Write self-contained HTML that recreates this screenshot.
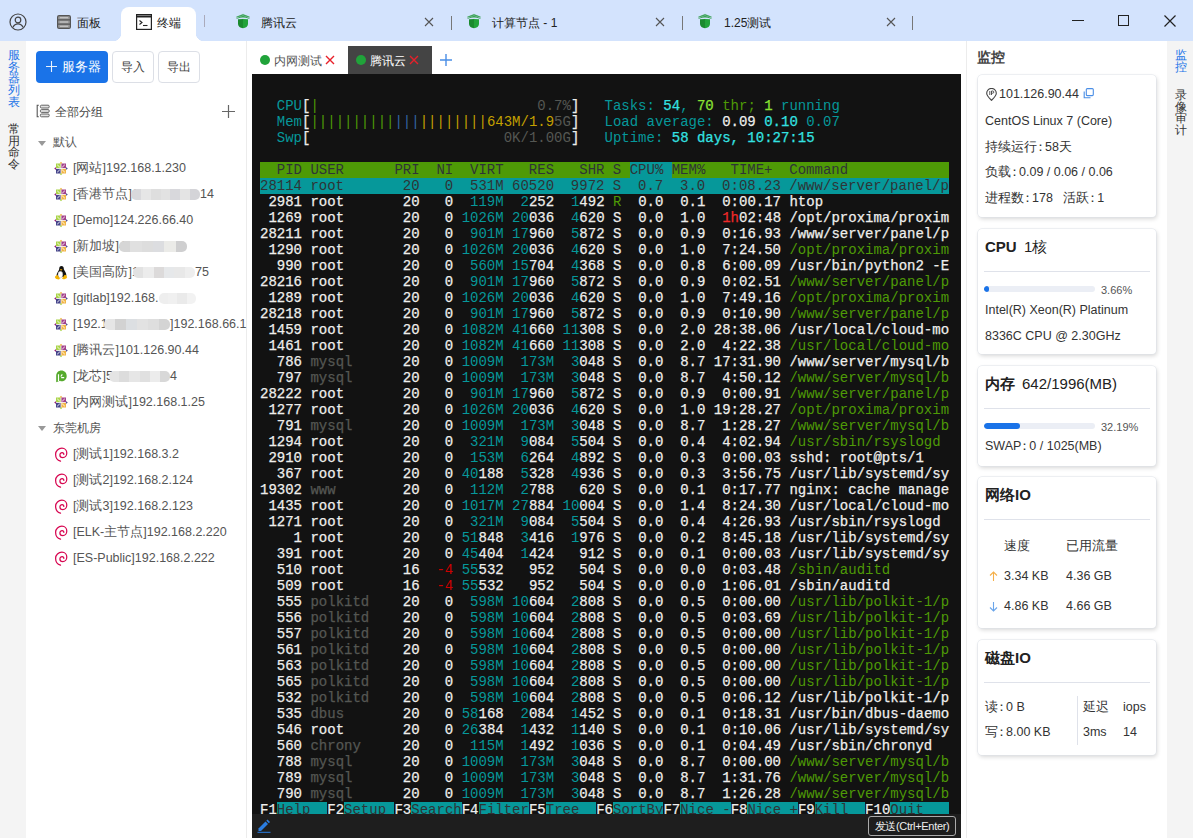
<!DOCTYPE html>
<html><head><meta charset="utf-8">
<style>
*{margin:0;padding:0;box-sizing:border-box}
html,body{width:1193px;height:838px;overflow:hidden;background:#fff;font-family:"Liberation Sans",sans-serif;color:#333;position:relative}
.abs{position:absolute}
#topbar{position:absolute;left:0;top:0;width:1193px;height:41px;background:#d3e3fd}
.tabtxt{position:absolute;top:15px;font-size:12px;line-height:16px;color:#222;white-space:nowrap}
.sep{position:absolute;width:1px;background:#777}
#lstrip{position:absolute;left:0;top:41px;width:26px;height:797px;background:#f4f4f4}
.vtxt{position:absolute;left:7.5px;width:13px;font-size:12px;line-height:11.7px;word-break:break-all;text-align:center}
#side{position:absolute;left:26px;top:41px;width:221px;height:797px;background:#fff;border-right:1px solid #ececec}
.btn{position:absolute;top:51px;height:32px;border:1px solid #dcdfe6;border-radius:4px;font-size:12px;line-height:30px;text-align:center;color:#444;background:#fff}
.item{position:absolute;left:54px;height:18px;white-space:nowrap;font-size:12.5px;line-height:18px;color:#555}
.item .ic{position:absolute;left:0;top:2px;width:14px;height:15px}
.item .ic svg{display:block}
.item .it{position:absolute;left:19px;top:0}
.blur{position:absolute;top:4px;height:11px;border-radius:5px;filter:blur(0.6px)}
#subtabs{position:absolute;left:252px;top:42px;width:709px;height:32px;background:#fff}
#term{position:absolute;left:252px;top:74px;width:709px;height:740px;background:#121212;overflow:hidden}
#term pre{position:absolute;left:8px;top:8px;font-family:"Liberation Mono",monospace;font-size:14px;line-height:16px;color:#eeeeec;white-space:pre}
#term i{font-style:normal}
#term .k{color:#2e3436} #term .g{color:#4e9a06} #term .G{color:#8ae234} #term .c{color:#06989a} #term .C{color:#34e2e2}
#term .w{color:#eeeeec} #term .r{color:#555753} #term .d{color:#cc0000} #term .D{color:#ef2929} #term .y{color:#c4a000} #term .l{color:#3465a4}
#term .b{-webkit-text-stroke:0.25px currentColor} #term .bg{background:#4e9a06} #term .bc{background:#06989a}
#tbar{position:absolute;left:252px;top:814px;width:709px;height:24px;background:#1e1e1e}
#mon{position:absolute;left:966px;top:41px;width:201px;height:797px;background:#fff;border-left:1px solid #ececec}
#rstrip{position:absolute;left:1167px;top:41px;width:26px;height:797px;background:#f4f4f4}
.card{position:absolute;left:978px;width:178px;background:#fff;border-radius:4px;box-shadow:0 0 0 0.6px #dfe3ea,1px 2px 4px rgba(0,0,0,.16)}
.ct{position:absolute;left:7px;font-size:12.5px;line-height:16px;color:#333;white-space:nowrap}
.hd{position:absolute;left:7px;font-size:15px;line-height:18px;color:#222;white-space:nowrap}
.hd b{font-weight:bold}
.dv{position:absolute;left:6px;right:6px;height:1px;background:#dfe2ea}
.pb{position:absolute;left:6px;width:111px;height:6px;border-radius:3px;background:#ebeef5;overflow:hidden}
.pb i{position:absolute;left:0;top:0;height:6px;border-radius:3px;background:#1a73e8}
.cl{display:inline-block;margin-left:-3.5px;margin-right:-1.5px}
.pct{position:absolute;left:123px;font-size:11px;line-height:14px;color:#555}
</style></head><body>
<div id="topbar">
  <svg class="abs" style="left:9px;top:13px" width="18" height="18" viewBox="0 0 18 18"><circle cx="9" cy="9" r="8" fill="none" stroke="#444" stroke-width="1.2"/><circle cx="9" cy="7" r="2.8" fill="none" stroke="#444" stroke-width="1.2"/><path d="M4 14.2c1-2.2 2.8-3.4 5-3.4s4 1.2 5 3.4" fill="none" stroke="#444" stroke-width="1.2"/></svg>
  <svg class="abs" style="left:57px;top:15px" width="14" height="14" viewBox="0 0 14 14"><rect x="0.6" y="0.6" width="12.8" height="12.8" rx="1.5" fill="#9a9a9a" stroke="#555" stroke-width="1.2"/><path d="M1 4.8h12M1 9.2h12" stroke="#555" stroke-width="1.2"/><path d="M3 2.7h8M3 7h8M3 11.3h8" stroke="#ccc" stroke-width="1"/></svg>
  <div class="tabtxt" style="left:77px">面板</div>
  <div class="abs" style="left:121px;top:7px;width:75px;height:34px;background:#fff;border-radius:8px 8px 0 0"></div>
  <div class="abs" style="left:113px;top:33px;width:8px;height:8px;background:radial-gradient(circle at 0 0,#d3e3fd 8px,#fff 8.5px)"></div>
  <div class="abs" style="left:196px;top:33px;width:8px;height:8px;background:radial-gradient(circle at 100% 0,#d3e3fd 8px,#fff 8.5px)"></div>
  <svg class="abs" style="left:136px;top:14px" width="16" height="16" viewBox="0 0 16 16"><rect x="0.6" y="0.6" width="14.8" height="14.8" fill="#fff" stroke="#222" stroke-width="1.2"/><path d="M1 2.5h14" stroke="#222" stroke-width="2"/><path d="M3.5 6.5l2.5 2-2.5 2" fill="none" stroke="#222" stroke-width="1.1"/><path d="M7 11.5h4.5" stroke="#222" stroke-width="1.1"/></svg>
  <div class="tabtxt" style="left:157px">终端</div>
  <div class="sep" style="left:204px;top:15px;height:12px;background:#aab"></div>
  <div class="abs" style="left:236px;top:13px"><svg width="14" height="16" viewBox="0 0 14 16"><path d="M7 0.8L12.8 3.4 7 5.2 1.2 3.4z" fill="#3fae5a" opacity=".55"/><path d="M0.3 4.1L7 1.9l6.7 2.2M0.6 5.4L7 3.4l6.4 2" fill="none" stroke="#2e9a48" stroke-width="1" opacity=".85"/><path d="M2 6.2L7 6v9.2c-2.8-.3-5-2-5-4.3z" fill="#1a8a2e"/><path d="M12 6.2L7 6v9.2c2.8-.3 5-2 5-4.3z" fill="#22a33a"/></svg></div>
  <div class="tabtxt" style="left:261px">腾讯云</div>
  <div class="abs" style="left:424px;top:13px"><svg width="10" height="10" viewBox="0 0 10 10"><path d="M1 1l8 8M9 1l-8 8" stroke="#555" stroke-width="1.1"/></svg></div>
  <div class="sep" style="left:451px;top:16px;height:14px"></div>
  <div class="abs" style="left:467px;top:13px"><svg width="14" height="16" viewBox="0 0 14 16"><path d="M7 0.8L12.8 3.4 7 5.2 1.2 3.4z" fill="#3fae5a" opacity=".55"/><path d="M0.3 4.1L7 1.9l6.7 2.2M0.6 5.4L7 3.4l6.4 2" fill="none" stroke="#2e9a48" stroke-width="1" opacity=".85"/><path d="M2 6.2L7 6v9.2c-2.8-.3-5-2-5-4.3z" fill="#1a8a2e"/><path d="M12 6.2L7 6v9.2c2.8-.3 5-2 5-4.3z" fill="#22a33a"/></svg></div>
  <div class="tabtxt" style="left:492px">计算节点 - 1</div>
  <div class="abs" style="left:655px;top:13px"><svg width="10" height="10" viewBox="0 0 10 10"><path d="M1 1l8 8M9 1l-8 8" stroke="#555" stroke-width="1.1"/></svg></div>
  <div class="sep" style="left:682px;top:16px;height:14px"></div>
  <div class="abs" style="left:698px;top:13px"><svg width="14" height="16" viewBox="0 0 14 16"><path d="M7 0.8L12.8 3.4 7 5.2 1.2 3.4z" fill="#3fae5a" opacity=".55"/><path d="M0.3 4.1L7 1.9l6.7 2.2M0.6 5.4L7 3.4l6.4 2" fill="none" stroke="#2e9a48" stroke-width="1" opacity=".85"/><path d="M2 6.2L7 6v9.2c-2.8-.3-5-2-5-4.3z" fill="#1a8a2e"/><path d="M12 6.2L7 6v9.2c2.8-.3 5-2 5-4.3z" fill="#22a33a"/></svg></div>
  <div class="tabtxt" style="left:724px">1.25测试</div>
  <div class="abs" style="left:886px;top:13px"><svg width="10" height="10" viewBox="0 0 10 10"><path d="M1 1l8 8M9 1l-8 8" stroke="#555" stroke-width="1.1"/></svg></div>
  <div class="sep" style="left:912px;top:16px;height:14px"></div>
  <div class="abs" style="left:1072px;top:20px;width:12px;height:1px;background:#222"></div>
  <div class="abs" style="left:1118px;top:15px;width:11px;height:11px;border:1.2px solid #222"></div>
  <svg class="abs" style="left:1164px;top:15px" width="12" height="12" viewBox="0 0 12 12"><path d="M0.5 0.5l11 11M11.5 0.5l-11 11" stroke="#222" stroke-width="1.2"/></svg>
</div>

<div id="lstrip">
  <div class="vtxt" style="top:9px;color:#1a73e8">服务器列表</div>
  <div class="vtxt" style="top:83px;color:#333">常用命令</div>
</div>
<div id="side"></div>
<div class="abs" style="left:36px;top:51px;width:72px;height:32px;background:#1a73e8;border-radius:4px;color:#fff;font-size:12.5px;line-height:32px">
  <svg class="abs" style="left:10px;top:10px" width="11" height="11" viewBox="0 0 11 11"><path d="M5.5 0v11M0 5.5h11" stroke="#fff" stroke-width="1.1" opacity=".9"/></svg><span class="abs" style="left:26px;top:0;font-weight:500">服务器</span></div>
<div class="btn" style="left:112px;width:42px">导入</div>
<div class="btn" style="left:158px;width:42px">导出</div>
<svg class="abs" style="left:36px;top:104px" width="14" height="14" viewBox="0 0 14 14"><path d="M2.8 1.3H1.2v11.4h1.6" fill="none" stroke="#555" stroke-width="1.1"/><rect x="4.4" y="1.2" width="8.8" height="2.8" rx="1.1" fill="#e4e4e4" stroke="#555" stroke-width=".9"/><rect x="4.4" y="5.6" width="8.8" height="2.8" rx="1.1" fill="#e4e4e4" stroke="#555" stroke-width=".9"/><rect x="4.4" y="10" width="8.8" height="2.8" rx="1.1" fill="#e4e4e4" stroke="#555" stroke-width=".9"/></svg>
<div class="abs" style="left:55px;top:103px;font-size:12px;line-height:18px;color:#444">全部分组</div>
<svg class="abs" style="left:222px;top:105px" width="13" height="13" viewBox="0 0 13 13"><path d="M6.5 0v13M0 6.5h13" stroke="#666" stroke-width="1.2"/></svg>
<svg class="abs" style="left:38px;top:141px" width="8" height="5" viewBox="0 0 8 5"><path d="M0 0h8L4 5z" fill="#999"/></svg>
<div class="abs" style="left:53px;top:133px;font-size:12px;line-height:18px;color:#555">默认</div>
<svg class="abs" style="left:38px;top:426px" width="8" height="5" viewBox="0 0 8 5"><path d="M0 0h8L4 5z" fill="#999"/></svg>
<div class="abs" style="left:53px;top:419px;font-size:12px;line-height:18px;color:#555">东莞机房</div>
<div class="item" style="top:159px"><span class="ic"><svg width="14" height="15" viewBox="0 0 14 15"><path d="M5.6 2.6L7 0.7l1.4 1.9z" fill="#efa724"/><path d="M2.1 6.1L0.2 7.5l1.9 1.4z" fill="#932279"/><path d="M11.9 6.1l1.9 1.4-1.9 1.4z" fill="#262577" opacity=".8"/><path d="M5.6 12.4L7 14.3l1.4-1.9z" fill="#9ccd2a"/><g opacity=".85"><rect x="2" y="2.5" width="4.6" height="4.6" fill="#9ccd2a"/><rect x="7.4" y="2.5" width="4.6" height="4.6" fill="#932279"/><rect x="2" y="7.9" width="4.6" height="4.6" fill="#262577"/><rect x="7.4" y="7.9" width="4.6" height="4.6" fill="#efa724"/></g><path d="M3.2 3.7l2.6 2.6M8.2 6.3l2.6-2.6M3.2 11.3l2.6-2.6M8.2 8.7l2.6 2.6" stroke="#fff" stroke-width="1.1" opacity=".6"/></svg></span><span class="it">[网站]192.168.1.230</span></div>
<div class="item" style="top:185px"><span class="ic"><svg width="14" height="15" viewBox="0 0 14 15"><path d="M5.6 2.6L7 0.7l1.4 1.9z" fill="#efa724"/><path d="M2.1 6.1L0.2 7.5l1.9 1.4z" fill="#932279"/><path d="M11.9 6.1l1.9 1.4-1.9 1.4z" fill="#262577" opacity=".8"/><path d="M5.6 12.4L7 14.3l1.4-1.9z" fill="#9ccd2a"/><g opacity=".85"><rect x="2" y="2.5" width="4.6" height="4.6" fill="#9ccd2a"/><rect x="7.4" y="2.5" width="4.6" height="4.6" fill="#932279"/><rect x="2" y="7.9" width="4.6" height="4.6" fill="#262577"/><rect x="7.4" y="7.9" width="4.6" height="4.6" fill="#efa724"/></g><path d="M3.2 3.7l2.6 2.6M8.2 6.3l2.6-2.6M3.2 11.3l2.6-2.6M8.2 8.7l2.6 2.6" stroke="#fff" stroke-width="1.1" opacity=".6"/></svg></span><span class="it">[香港节点]1</span><span class="blur" style="left:77px;width:69px;background:linear-gradient(90deg,#d9d9dc 0.0%,#d9d9dc 14.3%,#e6e6e6 14.3%,#e6e6e6 28.6%,#dedede 28.6%,#dedede 42.9%,#e2e2e2 42.9%,#e2e2e2 57.1%,#d8d8dc 57.1%,#d8d8dc 71.4%,#e4e4e4 71.4%,#e4e4e4 85.7%,#d4d4d8 85.7%,#d4d4d8 100.0%)"></span><span class="it" style="left:146px">14</span></div>
<div class="item" style="top:211px"><span class="ic"><svg width="14" height="15" viewBox="0 0 14 15"><path d="M5.6 2.6L7 0.7l1.4 1.9z" fill="#efa724"/><path d="M2.1 6.1L0.2 7.5l1.9 1.4z" fill="#932279"/><path d="M11.9 6.1l1.9 1.4-1.9 1.4z" fill="#262577" opacity=".8"/><path d="M5.6 12.4L7 14.3l1.4-1.9z" fill="#9ccd2a"/><g opacity=".85"><rect x="2" y="2.5" width="4.6" height="4.6" fill="#9ccd2a"/><rect x="7.4" y="2.5" width="4.6" height="4.6" fill="#932279"/><rect x="2" y="7.9" width="4.6" height="4.6" fill="#262577"/><rect x="7.4" y="7.9" width="4.6" height="4.6" fill="#efa724"/></g><path d="M3.2 3.7l2.6 2.6M8.2 6.3l2.6-2.6M3.2 11.3l2.6-2.6M8.2 8.7l2.6 2.6" stroke="#fff" stroke-width="1.1" opacity=".6"/></svg></span><span class="it">[Demo]124.226.66.40</span></div>
<div class="item" style="top:237px"><span class="ic"><svg width="14" height="15" viewBox="0 0 14 15"><path d="M5.6 2.6L7 0.7l1.4 1.9z" fill="#efa724"/><path d="M2.1 6.1L0.2 7.5l1.9 1.4z" fill="#932279"/><path d="M11.9 6.1l1.9 1.4-1.9 1.4z" fill="#262577" opacity=".8"/><path d="M5.6 12.4L7 14.3l1.4-1.9z" fill="#9ccd2a"/><g opacity=".85"><rect x="2" y="2.5" width="4.6" height="4.6" fill="#9ccd2a"/><rect x="7.4" y="2.5" width="4.6" height="4.6" fill="#932279"/><rect x="2" y="7.9" width="4.6" height="4.6" fill="#262577"/><rect x="7.4" y="7.9" width="4.6" height="4.6" fill="#efa724"/></g><path d="M3.2 3.7l2.6 2.6M8.2 6.3l2.6-2.6M3.2 11.3l2.6-2.6M8.2 8.7l2.6 2.6" stroke="#fff" stroke-width="1.1" opacity=".6"/></svg></span><span class="it">[新加坡]4</span><span class="blur" style="left:65px;width:68px;background:linear-gradient(90deg,#d6d6d6 0.0%,#d6d6d6 16.7%,#e0e0e0 16.7%,#e0e0e0 33.3%,#dddddd 33.3%,#dddddd 50.0%,#dcdde0 50.0%,#dcdde0 66.7%,#ebebe8 66.7%,#ebebe8 83.3%,#cfcfd0 83.3%,#cfcfd0 100.0%)"></span></div>
<div class="item" style="top:263px"><span class="ic"><svg width="14" height="15" viewBox="0 0 14 15"><path d="M7.5 1c-1.6 0-2.3 1.3-2.3 2.8 0 1-.4 1.6-1 2.5-.8 1.2-1.6 2.6-1.6 4.2 0 .8.3 1.3.6 1.6h8.6c.4-.6.6-1.4.5-2.3-.2-1.6-1-3-1.8-4.2-.6-.9-.8-1.6-.8-2.5C9.7 2.1 9 1 7.5 1z" fill="#111"/><ellipse cx="6.4" cy="9.6" rx="2.4" ry="3.3" fill="#fff" stroke="#999" stroke-width=".4"/><path d="M5.7 4.2h2.8l-1.4 1.6z" fill="#f5a800"/><path d="M0.9 12.2c.3-1.2 1.5-2.2 2.3-2.2.7 0 1.5 2 2.5 3.1.5.6-.2 1.3-1 1.3-1.5 0-3.4-.7-3.8-2.2zM13.1 12.2c-.3-1.2-1.3-2.4-2-2.4-.7 0-1.8 2.2-2.8 3.3-.5.6.2 1.1 1 1.1 1.5 0 3.4-.6 3.8-2z" fill="#f5b400"/></svg></span><span class="it">[美国高防]1</span><span class="blur" style="left:79px;width:62px;background:linear-gradient(90deg,#e2e2e2 0.0%,#e2e2e2 16.7%,#ececec 16.7%,#ececec 33.3%,#dcdada 33.3%,#dcdada 50.0%,#e6e8ea 50.0%,#e6e8ea 66.7%,#e8e8e8 66.7%,#e8e8e8 83.3%,#eeeeee 83.3%,#eeeeee 100.0%)"></span><span class="it" style="left:141px">75</span></div>
<div class="item" style="top:289px"><span class="ic"><svg width="14" height="15" viewBox="0 0 14 15"><path d="M5.6 2.6L7 0.7l1.4 1.9z" fill="#efa724"/><path d="M2.1 6.1L0.2 7.5l1.9 1.4z" fill="#932279"/><path d="M11.9 6.1l1.9 1.4-1.9 1.4z" fill="#262577" opacity=".8"/><path d="M5.6 12.4L7 14.3l1.4-1.9z" fill="#9ccd2a"/><g opacity=".85"><rect x="2" y="2.5" width="4.6" height="4.6" fill="#9ccd2a"/><rect x="7.4" y="2.5" width="4.6" height="4.6" fill="#932279"/><rect x="2" y="7.9" width="4.6" height="4.6" fill="#262577"/><rect x="7.4" y="7.9" width="4.6" height="4.6" fill="#efa724"/></g><path d="M3.2 3.7l2.6 2.6M8.2 6.3l2.6-2.6M3.2 11.3l2.6-2.6M8.2 8.7l2.6 2.6" stroke="#fff" stroke-width="1.1" opacity=".6"/></svg></span><span class="it">[gitlab]192.168.</span><span class="blur" style="left:105px;width:37px;background:linear-gradient(90deg,#eeeeee 0.0%,#eeeeee 25.0%,#f0f0f0 25.0%,#f0f0f0 50.0%,#eaeaea 50.0%,#eaeaea 75.0%,#f2f2f2 75.0%,#f2f2f2 100.0%)"></span></div>
<div class="item" style="top:315px"><span class="ic"><svg width="14" height="15" viewBox="0 0 14 15"><path d="M5.6 2.6L7 0.7l1.4 1.9z" fill="#efa724"/><path d="M2.1 6.1L0.2 7.5l1.9 1.4z" fill="#932279"/><path d="M11.9 6.1l1.9 1.4-1.9 1.4z" fill="#262577" opacity=".8"/><path d="M5.6 12.4L7 14.3l1.4-1.9z" fill="#9ccd2a"/><g opacity=".85"><rect x="2" y="2.5" width="4.6" height="4.6" fill="#9ccd2a"/><rect x="7.4" y="2.5" width="4.6" height="4.6" fill="#932279"/><rect x="2" y="7.9" width="4.6" height="4.6" fill="#262577"/><rect x="7.4" y="7.9" width="4.6" height="4.6" fill="#efa724"/></g><path d="M3.2 3.7l2.6 2.6M8.2 6.3l2.6-2.6M3.2 11.3l2.6-2.6M8.2 8.7l2.6 2.6" stroke="#fff" stroke-width="1.1" opacity=".6"/></svg></span><span class="it">[192.1</span><span class="blur" style="left:50px;width:66px;background:linear-gradient(90deg,#e6e6e6 0.0%,#e6e6e6 16.7%,#d2d2d2 16.7%,#d2d2d2 33.3%,#dcdfe2 33.3%,#dcdfe2 50.0%,#e2e2e2 50.0%,#e2e2e2 66.7%,#dedede 66.7%,#dedede 83.3%,#d4d4d4 83.3%,#d4d4d4 100.0%)"></span><span class="it" style="left:116px">]192.168.66.1</span></div>
<div class="item" style="top:341px"><span class="ic"><svg width="14" height="15" viewBox="0 0 14 15"><path d="M5.6 2.6L7 0.7l1.4 1.9z" fill="#efa724"/><path d="M2.1 6.1L0.2 7.5l1.9 1.4z" fill="#932279"/><path d="M11.9 6.1l1.9 1.4-1.9 1.4z" fill="#262577" opacity=".8"/><path d="M5.6 12.4L7 14.3l1.4-1.9z" fill="#9ccd2a"/><g opacity=".85"><rect x="2" y="2.5" width="4.6" height="4.6" fill="#9ccd2a"/><rect x="7.4" y="2.5" width="4.6" height="4.6" fill="#932279"/><rect x="2" y="7.9" width="4.6" height="4.6" fill="#262577"/><rect x="7.4" y="7.9" width="4.6" height="4.6" fill="#efa724"/></g><path d="M3.2 3.7l2.6 2.6M8.2 6.3l2.6-2.6M3.2 11.3l2.6-2.6M8.2 8.7l2.6 2.6" stroke="#fff" stroke-width="1.1" opacity=".6"/></svg></span><span class="it">[腾讯云]101.126.90.44</span></div>
<div class="item" style="top:367px"><span class="ic"><svg width="14" height="15" viewBox="0 0 14 15"><path d="M2.2 13.2V6.8C2.2 3.7 4.5 1.5 7.4 1.5c3 0 5.3 2.3 5.3 5.4 0 3.2-2.4 5.4-5 5.4-.8 0-1.3-.2-1.5-.6z" fill="#55aa2c"/><path d="M4.5 5.2v7M6.8 7.5l1.5-2.2M7.2 8.7h3" stroke="#fff" stroke-width="1.2" fill="none"/></svg></span><span class="it">[龙芯]5</span><span class="blur" style="left:55px;width:61px;background:linear-gradient(90deg,#e4e4e4 0.0%,#e4e4e4 16.7%,#dcdcdc 16.7%,#dcdcdc 33.3%,#e6e6e6 33.3%,#e6e6e6 50.0%,#e0e0e0 50.0%,#e0e0e0 66.7%,#ececec 66.7%,#ececec 83.3%,#d8d8d8 83.3%,#d8d8d8 100.0%)"></span><span class="it" style="left:116px">4</span></div>
<div class="item" style="top:393px"><span class="ic"><svg width="14" height="15" viewBox="0 0 14 15"><path d="M5.6 2.6L7 0.7l1.4 1.9z" fill="#efa724"/><path d="M2.1 6.1L0.2 7.5l1.9 1.4z" fill="#932279"/><path d="M11.9 6.1l1.9 1.4-1.9 1.4z" fill="#262577" opacity=".8"/><path d="M5.6 12.4L7 14.3l1.4-1.9z" fill="#9ccd2a"/><g opacity=".85"><rect x="2" y="2.5" width="4.6" height="4.6" fill="#9ccd2a"/><rect x="7.4" y="2.5" width="4.6" height="4.6" fill="#932279"/><rect x="2" y="7.9" width="4.6" height="4.6" fill="#262577"/><rect x="7.4" y="7.9" width="4.6" height="4.6" fill="#efa724"/></g><path d="M3.2 3.7l2.6 2.6M8.2 6.3l2.6-2.6M3.2 11.3l2.6-2.6M8.2 8.7l2.6 2.6" stroke="#fff" stroke-width="1.1" opacity=".6"/></svg></span><span class="it">[内网测试]192.168.1.25</span></div>
<div class="item" style="top:445px"><span class="ic"><svg width="14" height="15" viewBox="0 0 14 15"><path d="M6.5 14.2C3.8 13.4 1.6 10.6 1.6 7.2 1.6 3.8 4.5 1.2 7.9 1.2c3 0 4.9 2.3 4.9 4.9 0 2.7-1.9 4.5-4 4.5-1.7 0-2.9-1.2-2.9-2.7 0-1.3 1.1-2.3 2.3-2.2 1 .1 1.7.8 1.6 1.7" fill="none" stroke="#d70751" stroke-width="1.25" stroke-linecap="round"/></svg></span><span class="it">[测试1]192.168.3.2</span></div>
<div class="item" style="top:471px"><span class="ic"><svg width="14" height="15" viewBox="0 0 14 15"><path d="M6.5 14.2C3.8 13.4 1.6 10.6 1.6 7.2 1.6 3.8 4.5 1.2 7.9 1.2c3 0 4.9 2.3 4.9 4.9 0 2.7-1.9 4.5-4 4.5-1.7 0-2.9-1.2-2.9-2.7 0-1.3 1.1-2.3 2.3-2.2 1 .1 1.7.8 1.6 1.7" fill="none" stroke="#d70751" stroke-width="1.25" stroke-linecap="round"/></svg></span><span class="it">[测试2]192.168.2.124</span></div>
<div class="item" style="top:497px"><span class="ic"><svg width="14" height="15" viewBox="0 0 14 15"><path d="M6.5 14.2C3.8 13.4 1.6 10.6 1.6 7.2 1.6 3.8 4.5 1.2 7.9 1.2c3 0 4.9 2.3 4.9 4.9 0 2.7-1.9 4.5-4 4.5-1.7 0-2.9-1.2-2.9-2.7 0-1.3 1.1-2.3 2.3-2.2 1 .1 1.7.8 1.6 1.7" fill="none" stroke="#d70751" stroke-width="1.25" stroke-linecap="round"/></svg></span><span class="it">[测试3]192.168.2.123</span></div>
<div class="item" style="top:523px"><span class="ic"><svg width="14" height="15" viewBox="0 0 14 15"><path d="M6.5 14.2C3.8 13.4 1.6 10.6 1.6 7.2 1.6 3.8 4.5 1.2 7.9 1.2c3 0 4.9 2.3 4.9 4.9 0 2.7-1.9 4.5-4 4.5-1.7 0-2.9-1.2-2.9-2.7 0-1.3 1.1-2.3 2.3-2.2 1 .1 1.7.8 1.6 1.7" fill="none" stroke="#d70751" stroke-width="1.25" stroke-linecap="round"/></svg></span><span class="it">[ELK-主节点]192.168.2.220</span></div>
<div class="item" style="top:549px"><span class="ic"><svg width="14" height="15" viewBox="0 0 14 15"><path d="M6.5 14.2C3.8 13.4 1.6 10.6 1.6 7.2 1.6 3.8 4.5 1.2 7.9 1.2c3 0 4.9 2.3 4.9 4.9 0 2.7-1.9 4.5-4 4.5-1.7 0-2.9-1.2-2.9-2.7 0-1.3 1.1-2.3 2.3-2.2 1 .1 1.7.8 1.6 1.7" fill="none" stroke="#d70751" stroke-width="1.25" stroke-linecap="round"/></svg></span><span class="it">[ES-Public]192.168.2.222</span></div>

<div id="subtabs">
  <div class="abs" style="left:8px;top:13px;width:10px;height:10px;border-radius:50%;background:#20a33a"></div>
  <div class="abs" style="left:22px;top:11px;font-size:12px;line-height:16px;color:#555">内网测试</div>
  <svg class="abs" style="left:73px;top:13px" width="10" height="10" viewBox="0 0 10 10"><path d="M1 1l8 8M9 1l-8 8" stroke="#e8202a" stroke-width="1.4"/></svg>
  <div class="abs" style="left:96px;top:4px;width:84px;height:28px;background:#444"></div>
  <div class="abs" style="left:104px;top:13px;width:10px;height:10px;border-radius:50%;background:#20a33a"></div>
  <div class="abs" style="left:118px;top:11px;font-size:12px;line-height:16px;color:#fff">腾讯云</div>
  <svg class="abs" style="left:157px;top:13px" width="10" height="10" viewBox="0 0 10 10"><path d="M1 1l8 8M9 1l-8 8" stroke="#e8202a" stroke-width="1.4"/></svg>
  <svg class="abs" style="left:188px;top:12px" width="12" height="12" viewBox="0 0 12 12"><path d="M6 0v12M0 6h12" stroke="#4a8ee6" stroke-width="1.4"/></svg>
</div>
<div id="term"><pre> 
  <i class="c">CPU</i><i class="w b">[</i><i class="g">|</i>                          <i class="r">0.7%</i><i class="w b">]</i>   <i class="c">Tasks:</i><i class="C b"> 54</i><i class="c">,</i><i class="G b"> 70</i><i class="g"> thr;</i><i class="G b"> 1</i><i class="c"> running</i>
  <i class="c">Mem</i><i class="w b">[</i><i class="g">||||||||||</i><i class="l">|||</i><i class="y">||||||||</i><i class="y">643M/1.9</i><i class="r">5G</i><i class="w b">]</i>   <i class="c">Load average:</i><i class="w b"> 0.09</i><i class="C b"> 0.10</i><i class="c"> 0.07</i>
  <i class="c">Swp</i><i class="w b">[</i>                       <i class="r">0K/1.00G</i><i class="w b">]</i>   <i class="c">Uptime:</i><i class="C b"> 58 days, 10:27:15</i>
 
<i class="k bg">  PID USER      PRI  NI  VIRT   RES   SHR S </i><i class="k bc">CPU% </i><i class="k bg">MEM%   TIME+  Command            </i>
<i class="k bc">28114 root       20   0  531M 60520  9972 S  0.7  3.0  0:08.23 /www/server/panel/p</i>
<i class="w b"> 2981</i> <i class="w b">root     </i><i class="w b">  20</i><i class="w b">   0</i><i class="c">  119M</i>  <i class="c">2</i><i class="w b">252</i>  <i class="c">1</i><i class="w b">492</i> <i class="g">R</i><i class="w b">  0.0</i><i class="w b">  0.1</i> <i class="w b"> 0:00.17</i> <i class="w b">htop</i>
<i class="w b"> 1269</i> <i class="w b">root     </i><i class="w b">  20</i><i class="w b">   0</i><i class="c"> 1026M</i> <i class="c">20</i><i class="w b">036</i>  <i class="c">4</i><i class="w b">620</i> <i class="w b">S</i><i class="w b">  0.0</i><i class="w b">  1.0</i> <i class="D b"> 1h</i><i class="w b">02:48</i> <i class="w b">/opt/proxima/proxim</i>
<i class="w b">28211</i> <i class="w b">root     </i><i class="w b">  20</i><i class="w b">   0</i><i class="c">  901M</i> <i class="c">17</i><i class="w b">960</i>  <i class="c">5</i><i class="w b">872</i> <i class="w b">S</i><i class="w b">  0.0</i><i class="w b">  0.9</i> <i class="w b"> 0:16.93</i> <i class="w b">/www/server/panel/p</i>
<i class="w b"> 1290</i> <i class="w b">root     </i><i class="w b">  20</i><i class="w b">   0</i><i class="c"> 1026M</i> <i class="c">20</i><i class="w b">036</i>  <i class="c">4</i><i class="w b">620</i> <i class="w b">S</i><i class="w b">  0.0</i><i class="w b">  1.0</i> <i class="w b"> 7:24.50</i> <i class="g">/opt/proxima/proxim</i>
<i class="w b">  990</i> <i class="w b">root     </i><i class="w b">  20</i><i class="w b">   0</i><i class="c">  560M</i> <i class="c">15</i><i class="w b">704</i>  <i class="c">4</i><i class="w b">368</i> <i class="w b">S</i><i class="w b">  0.0</i><i class="w b">  0.8</i> <i class="w b"> 6:00.09</i> <i class="w b">/usr/bin/python2 -E</i>
<i class="w b">28216</i> <i class="w b">root     </i><i class="w b">  20</i><i class="w b">   0</i><i class="c">  901M</i> <i class="c">17</i><i class="w b">960</i>  <i class="c">5</i><i class="w b">872</i> <i class="w b">S</i><i class="w b">  0.0</i><i class="w b">  0.9</i> <i class="w b"> 0:02.51</i> <i class="g">/www/server/panel/p</i>
<i class="w b"> 1289</i> <i class="w b">root     </i><i class="w b">  20</i><i class="w b">   0</i><i class="c"> 1026M</i> <i class="c">20</i><i class="w b">036</i>  <i class="c">4</i><i class="w b">620</i> <i class="w b">S</i><i class="w b">  0.0</i><i class="w b">  1.0</i> <i class="w b"> 7:49.16</i> <i class="g">/opt/proxima/proxim</i>
<i class="w b">28218</i> <i class="w b">root     </i><i class="w b">  20</i><i class="w b">   0</i><i class="c">  901M</i> <i class="c">17</i><i class="w b">960</i>  <i class="c">5</i><i class="w b">872</i> <i class="w b">S</i><i class="w b">  0.0</i><i class="w b">  0.9</i> <i class="w b"> 0:10.90</i> <i class="g">/www/server/panel/p</i>
<i class="w b"> 1459</i> <i class="w b">root     </i><i class="w b">  20</i><i class="w b">   0</i><i class="c"> 1082M</i> <i class="c">41</i><i class="w b">660</i> <i class="c">11</i><i class="w b">308</i> <i class="w b">S</i><i class="w b">  0.0</i><i class="w b">  2.0</i> <i class="w b">28:38.06</i> <i class="w b">/usr/local/cloud-mo</i>
<i class="w b"> 1461</i> <i class="w b">root     </i><i class="w b">  20</i><i class="w b">   0</i><i class="c"> 1082M</i> <i class="c">41</i><i class="w b">660</i> <i class="c">11</i><i class="w b">308</i> <i class="w b">S</i><i class="w b">  0.0</i><i class="w b">  2.0</i> <i class="w b"> 4:22.38</i> <i class="g">/usr/local/cloud-mo</i>
<i class="w b">  786</i> <i class="r b">mysql    </i><i class="w b">  20</i><i class="w b">   0</i><i class="c"> 1009M</i><i class="c">  173M</i>  <i class="c">3</i><i class="w b">048</i> <i class="w b">S</i><i class="w b">  0.0</i><i class="w b">  8.7</i> <i class="w b">17:31.90</i> <i class="w b">/www/server/mysql/b</i>
<i class="w b">  797</i> <i class="r b">mysql    </i><i class="w b">  20</i><i class="w b">   0</i><i class="c"> 1009M</i><i class="c">  173M</i>  <i class="c">3</i><i class="w b">048</i> <i class="w b">S</i><i class="w b">  0.0</i><i class="w b">  8.7</i> <i class="w b"> 4:50.12</i> <i class="g">/www/server/mysql/b</i>
<i class="w b">28222</i> <i class="w b">root     </i><i class="w b">  20</i><i class="w b">   0</i><i class="c">  901M</i> <i class="c">17</i><i class="w b">960</i>  <i class="c">5</i><i class="w b">872</i> <i class="w b">S</i><i class="w b">  0.0</i><i class="w b">  0.9</i> <i class="w b"> 0:00.91</i> <i class="g">/www/server/panel/p</i>
<i class="w b"> 1277</i> <i class="w b">root     </i><i class="w b">  20</i><i class="w b">   0</i><i class="c"> 1026M</i> <i class="c">20</i><i class="w b">036</i>  <i class="c">4</i><i class="w b">620</i> <i class="w b">S</i><i class="w b">  0.0</i><i class="w b">  1.0</i> <i class="w b">19:28.27</i> <i class="g">/opt/proxima/proxim</i>
<i class="w b">  791</i> <i class="r b">mysql    </i><i class="w b">  20</i><i class="w b">   0</i><i class="c"> 1009M</i><i class="c">  173M</i>  <i class="c">3</i><i class="w b">048</i> <i class="w b">S</i><i class="w b">  0.0</i><i class="w b">  8.7</i> <i class="w b"> 1:28.27</i> <i class="g">/www/server/mysql/b</i>
<i class="w b"> 1294</i> <i class="w b">root     </i><i class="w b">  20</i><i class="w b">   0</i><i class="c">  321M</i>  <i class="c">9</i><i class="w b">084</i>  <i class="c">5</i><i class="w b">504</i> <i class="w b">S</i><i class="w b">  0.0</i><i class="w b">  0.4</i> <i class="w b"> 4:02.94</i> <i class="g">/usr/sbin/rsyslogd</i>
<i class="w b"> 2910</i> <i class="w b">root     </i><i class="w b">  20</i><i class="w b">   0</i><i class="c">  153M</i>  <i class="c">6</i><i class="w b">264</i>  <i class="c">4</i><i class="w b">892</i> <i class="w b">S</i><i class="w b">  0.0</i><i class="w b">  0.3</i> <i class="w b"> 0:00.03</i> <i class="w b">sshd: root@pts/1</i>
<i class="w b">  367</i> <i class="w b">root     </i><i class="w b">  20</i><i class="w b">   0</i> <i class="c">40</i><i class="w b">188</i>  <i class="c">5</i><i class="w b">328</i>  <i class="c">4</i><i class="w b">936</i> <i class="w b">S</i><i class="w b">  0.0</i><i class="w b">  0.3</i> <i class="w b"> 3:56.75</i> <i class="w b">/usr/lib/systemd/sy</i>
<i class="w b">19302</i> <i class="r b">www      </i><i class="w b">  20</i><i class="w b">   0</i><i class="c">  112M</i>  <i class="c">2</i><i class="w b">788</i><i class="w b">   620</i> <i class="w b">S</i><i class="w b">  0.0</i><i class="w b">  0.1</i> <i class="w b"> 0:17.77</i> <i class="w b">nginx: cache manage</i>
<i class="w b"> 1435</i> <i class="w b">root     </i><i class="w b">  20</i><i class="w b">   0</i><i class="c"> 1017M</i> <i class="c">27</i><i class="w b">884</i> <i class="c">10</i><i class="w b">004</i> <i class="w b">S</i><i class="w b">  0.0</i><i class="w b">  1.4</i> <i class="w b"> 8:24.30</i> <i class="w b">/usr/local/cloud-mo</i>
<i class="w b"> 1271</i> <i class="w b">root     </i><i class="w b">  20</i><i class="w b">   0</i><i class="c">  321M</i>  <i class="c">9</i><i class="w b">084</i>  <i class="c">5</i><i class="w b">504</i> <i class="w b">S</i><i class="w b">  0.0</i><i class="w b">  0.4</i> <i class="w b"> 4:26.93</i> <i class="w b">/usr/sbin/rsyslogd</i>
<i class="w b">    1</i> <i class="w b">root     </i><i class="w b">  20</i><i class="w b">   0</i> <i class="c">51</i><i class="w b">848</i>  <i class="c">3</i><i class="w b">416</i>  <i class="c">1</i><i class="w b">976</i> <i class="w b">S</i><i class="w b">  0.0</i><i class="w b">  0.2</i> <i class="w b"> 8:45.18</i> <i class="w b">/usr/lib/systemd/sy</i>
<i class="w b">  391</i> <i class="w b">root     </i><i class="w b">  20</i><i class="w b">   0</i> <i class="c">45</i><i class="w b">404</i>  <i class="c">1</i><i class="w b">424</i><i class="w b">   912</i> <i class="w b">S</i><i class="w b">  0.0</i><i class="w b">  0.1</i> <i class="w b"> 0:00.03</i> <i class="w b">/usr/lib/systemd/sy</i>
<i class="w b">  510</i> <i class="w b">root     </i><i class="w b">  16</i><i class="d">  -4</i> <i class="c">55</i><i class="w b">532</i><i class="w b">   952</i><i class="w b">   504</i> <i class="w b">S</i><i class="w b">  0.0</i><i class="w b">  0.0</i> <i class="w b"> 0:03.48</i> <i class="g">/sbin/auditd</i>
<i class="w b">  509</i> <i class="w b">root     </i><i class="w b">  16</i><i class="d">  -4</i> <i class="c">55</i><i class="w b">532</i><i class="w b">   952</i><i class="w b">   504</i> <i class="w b">S</i><i class="w b">  0.0</i><i class="w b">  0.0</i> <i class="w b"> 1:06.01</i> <i class="w b">/sbin/auditd</i>
<i class="w b">  555</i> <i class="r b">polkitd  </i><i class="w b">  20</i><i class="w b">   0</i><i class="c">  598M</i> <i class="c">10</i><i class="w b">604</i>  <i class="c">2</i><i class="w b">808</i> <i class="w b">S</i><i class="w b">  0.0</i><i class="w b">  0.5</i> <i class="w b"> 0:00.00</i> <i class="g">/usr/lib/polkit-1/p</i>
<i class="w b">  556</i> <i class="r b">polkitd  </i><i class="w b">  20</i><i class="w b">   0</i><i class="c">  598M</i> <i class="c">10</i><i class="w b">604</i>  <i class="c">2</i><i class="w b">808</i> <i class="w b">S</i><i class="w b">  0.0</i><i class="w b">  0.5</i> <i class="w b"> 0:03.69</i> <i class="g">/usr/lib/polkit-1/p</i>
<i class="w b">  557</i> <i class="r b">polkitd  </i><i class="w b">  20</i><i class="w b">   0</i><i class="c">  598M</i> <i class="c">10</i><i class="w b">604</i>  <i class="c">2</i><i class="w b">808</i> <i class="w b">S</i><i class="w b">  0.0</i><i class="w b">  0.5</i> <i class="w b"> 0:00.00</i> <i class="g">/usr/lib/polkit-1/p</i>
<i class="w b">  561</i> <i class="r b">polkitd  </i><i class="w b">  20</i><i class="w b">   0</i><i class="c">  598M</i> <i class="c">10</i><i class="w b">604</i>  <i class="c">2</i><i class="w b">808</i> <i class="w b">S</i><i class="w b">  0.0</i><i class="w b">  0.5</i> <i class="w b"> 0:00.00</i> <i class="g">/usr/lib/polkit-1/p</i>
<i class="w b">  563</i> <i class="r b">polkitd  </i><i class="w b">  20</i><i class="w b">   0</i><i class="c">  598M</i> <i class="c">10</i><i class="w b">604</i>  <i class="c">2</i><i class="w b">808</i> <i class="w b">S</i><i class="w b">  0.0</i><i class="w b">  0.5</i> <i class="w b"> 0:00.00</i> <i class="g">/usr/lib/polkit-1/p</i>
<i class="w b">  565</i> <i class="r b">polkitd  </i><i class="w b">  20</i><i class="w b">   0</i><i class="c">  598M</i> <i class="c">10</i><i class="w b">604</i>  <i class="c">2</i><i class="w b">808</i> <i class="w b">S</i><i class="w b">  0.0</i><i class="w b">  0.5</i> <i class="w b"> 0:00.00</i> <i class="g">/usr/lib/polkit-1/p</i>
<i class="w b">  532</i> <i class="r b">polkitd  </i><i class="w b">  20</i><i class="w b">   0</i><i class="c">  598M</i> <i class="c">10</i><i class="w b">604</i>  <i class="c">2</i><i class="w b">808</i> <i class="w b">S</i><i class="w b">  0.0</i><i class="w b">  0.5</i> <i class="w b"> 0:06.12</i> <i class="w b">/usr/lib/polkit-1/p</i>
<i class="w b">  535</i> <i class="r b">dbus     </i><i class="w b">  20</i><i class="w b">   0</i> <i class="c">58</i><i class="w b">168</i>  <i class="c">2</i><i class="w b">084</i>  <i class="c">1</i><i class="w b">452</i> <i class="w b">S</i><i class="w b">  0.0</i><i class="w b">  0.1</i> <i class="w b"> 0:18.31</i> <i class="w b">/usr/bin/dbus-daemo</i>
<i class="w b">  546</i> <i class="w b">root     </i><i class="w b">  20</i><i class="w b">   0</i> <i class="c">26</i><i class="w b">384</i>  <i class="c">1</i><i class="w b">432</i>  <i class="c">1</i><i class="w b">140</i> <i class="w b">S</i><i class="w b">  0.0</i><i class="w b">  0.1</i> <i class="w b"> 0:10.06</i> <i class="w b">/usr/lib/systemd/sy</i>
<i class="w b">  560</i> <i class="r b">chrony   </i><i class="w b">  20</i><i class="w b">   0</i><i class="c">  115M</i>  <i class="c">1</i><i class="w b">492</i>  <i class="c">1</i><i class="w b">036</i> <i class="w b">S</i><i class="w b">  0.0</i><i class="w b">  0.1</i> <i class="w b"> 0:04.49</i> <i class="w b">/usr/sbin/chronyd</i>
<i class="w b">  788</i> <i class="r b">mysql    </i><i class="w b">  20</i><i class="w b">   0</i><i class="c"> 1009M</i><i class="c">  173M</i>  <i class="c">3</i><i class="w b">048</i> <i class="w b">S</i><i class="w b">  0.0</i><i class="w b">  8.7</i> <i class="w b"> 0:00.00</i> <i class="g">/www/server/mysql/b</i>
<i class="w b">  789</i> <i class="r b">mysql    </i><i class="w b">  20</i><i class="w b">   0</i><i class="c"> 1009M</i><i class="c">  173M</i>  <i class="c">3</i><i class="w b">048</i> <i class="w b">S</i><i class="w b">  0.0</i><i class="w b">  8.7</i> <i class="w b"> 1:31.76</i> <i class="g">/www/server/mysql/b</i>
<i class="w b">  790</i> <i class="r b">mysql    </i><i class="w b">  20</i><i class="w b">   0</i><i class="c"> 1009M</i><i class="c">  173M</i>  <i class="c">3</i><i class="w b">048</i> <i class="w b">S</i><i class="w b">  0.0</i><i class="w b">  8.7</i> <i class="w b"> 1:26.28</i> <i class="g">/www/server/mysql/b</i>
<i class="w b">F1</i><i class="k bc">Help  </i><i class="w b">F2</i><i class="k bc">Setup </i><i class="w b">F3</i><i class="k bc">Search</i><i class="w b">F4</i><i class="k bc">Filter</i><i class="w b">F5</i><i class="k bc">Tree  </i><i class="w b">F6</i><i class="k bc">SortBy</i><i class="w b">F7</i><i class="k bc">Nice -</i><i class="w b">F8</i><i class="k bc">Nice +</i><i class="w b">F9</i><i class="k bc">Kill  </i><i class="w b">F10</i><i class="k bc">Quit   </i></pre></div>
<div id="tbar">
  <svg class="abs" style="left:5px;top:5px" width="14" height="14" viewBox="0 0 14 14"><path d="M1.5 9.5L8.5 2.5l2.5 2.5-7 7H1.5z" fill="#2a7de1"/><path d="M9.3 1.7l1.2-1.2 2.5 2.5-1.2 1.2z" fill="#2a7de1"/><path d="M0.5 13.3h13" stroke="#2a7de1" stroke-width="1"/></svg>
  <div class="abs" style="left:616px;top:2px;width:88px;height:20px;border:1px solid #aaa;border-radius:3px;color:#eee;font-size:11px;letter-spacing:-0.3px;line-height:18px;text-align:center;white-space:nowrap">发送(Ctrl+Enter)</div>
</div>

<div id="mon"></div>
<div class="abs" style="left:977px;top:48px;font-size:14px;line-height:18px;color:#444;font-weight:bold">监控</div>
<div class="card" style="top:75px;height:142px">
  <svg class="abs" style="left:8px;top:13px" width="11" height="13" viewBox="0 0 11 13"><path d="M5.5 12.3C3 9.8 0.7 7.6 0.7 5.2a4.8 4.8 0 0 1 9.6 0c0 2.4-2.3 4.6-4.8 7.1z" fill="none" stroke="#444" stroke-width="1.1"/><path d="M3.8 3v4M5.5 3v4M5.5 3h1.2a1.1 1.1 0 0 1 0 2.2H5.5" fill="none" stroke="#444" stroke-width=".9"/></svg>
  <div class="ct" style="left:21px;top:11px">101.126.90.44</div>
  <svg class="abs" style="left:105px;top:13px" width="11" height="11" viewBox="0 0 11 11"><rect x="3.3" y="0.6" width="7" height="7" rx="1" fill="none" stroke="#4a8ee6" stroke-width="1.1"/><path d="M1.2 3.5v6.3h6.3" fill="none" stroke="#4a8ee6" stroke-width="1.1"/></svg>
  <div class="ct" style="top:38px">CentOS Linux 7 (Core)</div>
  <div class="ct" style="top:64px">持续运行<span class="cl">：</span>58天</div>
  <div class="ct" style="top:89px">负载<span class="cl">：</span>0.09 / 0.06 / 0.06</div>
  <div class="ct" style="top:115px">进程数<span class="cl">：</span>178&nbsp;&nbsp;&nbsp;活跃<span class="cl">：</span>1</div>
</div>
<div class="card" style="top:229px;height:125px">
  <div class="hd" style="top:9px"><b>CPU</b><span style="position:absolute;left:39px">1核</span></div>
  <div class="dv" style="top:42px"></div>
  <div class="pb" style="top:57px"><i style="width:5px"></i></div>
  <div class="pct" style="top:54px">3.66%</div>
  <div class="ct" style="top:73px">Intel(R) Xeon(R) Platinum</div>
  <div class="ct" style="top:99px">8336C CPU @ 2.30GHz</div>
</div>
<div class="card" style="top:366px;height:100px">
  <div class="hd" style="top:9px"><b>内存</b><span style="position:absolute;left:37px">642/1996(MB)</span></div>
  <div class="dv" style="top:42px"></div>
  <div class="pb" style="top:57px"><i style="width:36px"></i></div>
  <div class="pct" style="top:54px">32.19%</div>
  <div class="ct" style="top:72px">SWAP<span class="cl">：</span>0 / 1025(MB)</div>
</div>
<div class="card" style="top:477px;height:151px">
  <div class="hd" style="top:9px"><b>网络IO</b></div>
  <div class="dv" style="top:42px"></div>
  <div class="ct" style="left:26px;top:61px">速度</div>
  <div class="ct" style="left:88px;top:61px">已用流量</div>
  <svg class="abs" style="left:11px;top:94px" width="9" height="10" viewBox="0 0 9 10"><path d="M4.5 10V1M1 4.5L4.5 1 8 4.5" fill="none" stroke="#f5b04a" stroke-width="1.1"/></svg>
  <div class="ct" style="left:26px;top:91px">3.34 KB</div>
  <div class="ct" style="left:88px;top:91px">4.36 GB</div>
  <svg class="abs" style="left:11px;top:125px" width="9" height="10" viewBox="0 0 9 10"><path d="M4.5 0v9M1 5.5L4.5 9 8 5.5" fill="none" stroke="#6aa5ea" stroke-width="1.1"/></svg>
  <div class="ct" style="left:26px;top:121px">4.86 KB</div>
  <div class="ct" style="left:88px;top:121px">4.66 GB</div>
</div>
<div class="card" style="top:640px;height:115px">
  <div class="hd" style="top:9px"><b>磁盘IO</b></div>
  <div class="dv" style="top:42px"></div>
  <div class="ct" style="top:59px">读<span class="cl">：</span>0 B</div>
  <div class="ct" style="top:84px">写<span class="cl">：</span>8.00 KB</div>
  <div class="abs" style="left:99px;top:56px;width:1px;height:49px;background:#dfe2ea"></div>
  <div class="ct" style="left:105px;top:59px">延迟</div>
  <div class="ct" style="left:145px;top:59px">iops</div>
  <div class="ct" style="left:105px;top:84px">3ms</div>
  <div class="ct" style="left:145px;top:84px">14</div>
</div>
<div id="rstrip">
  <div class="vtxt" style="top:9px;color:#1a73e8">监控</div>
  <div class="vtxt" style="top:49px;color:#333">录像审计</div>
</div>
</body></html>
